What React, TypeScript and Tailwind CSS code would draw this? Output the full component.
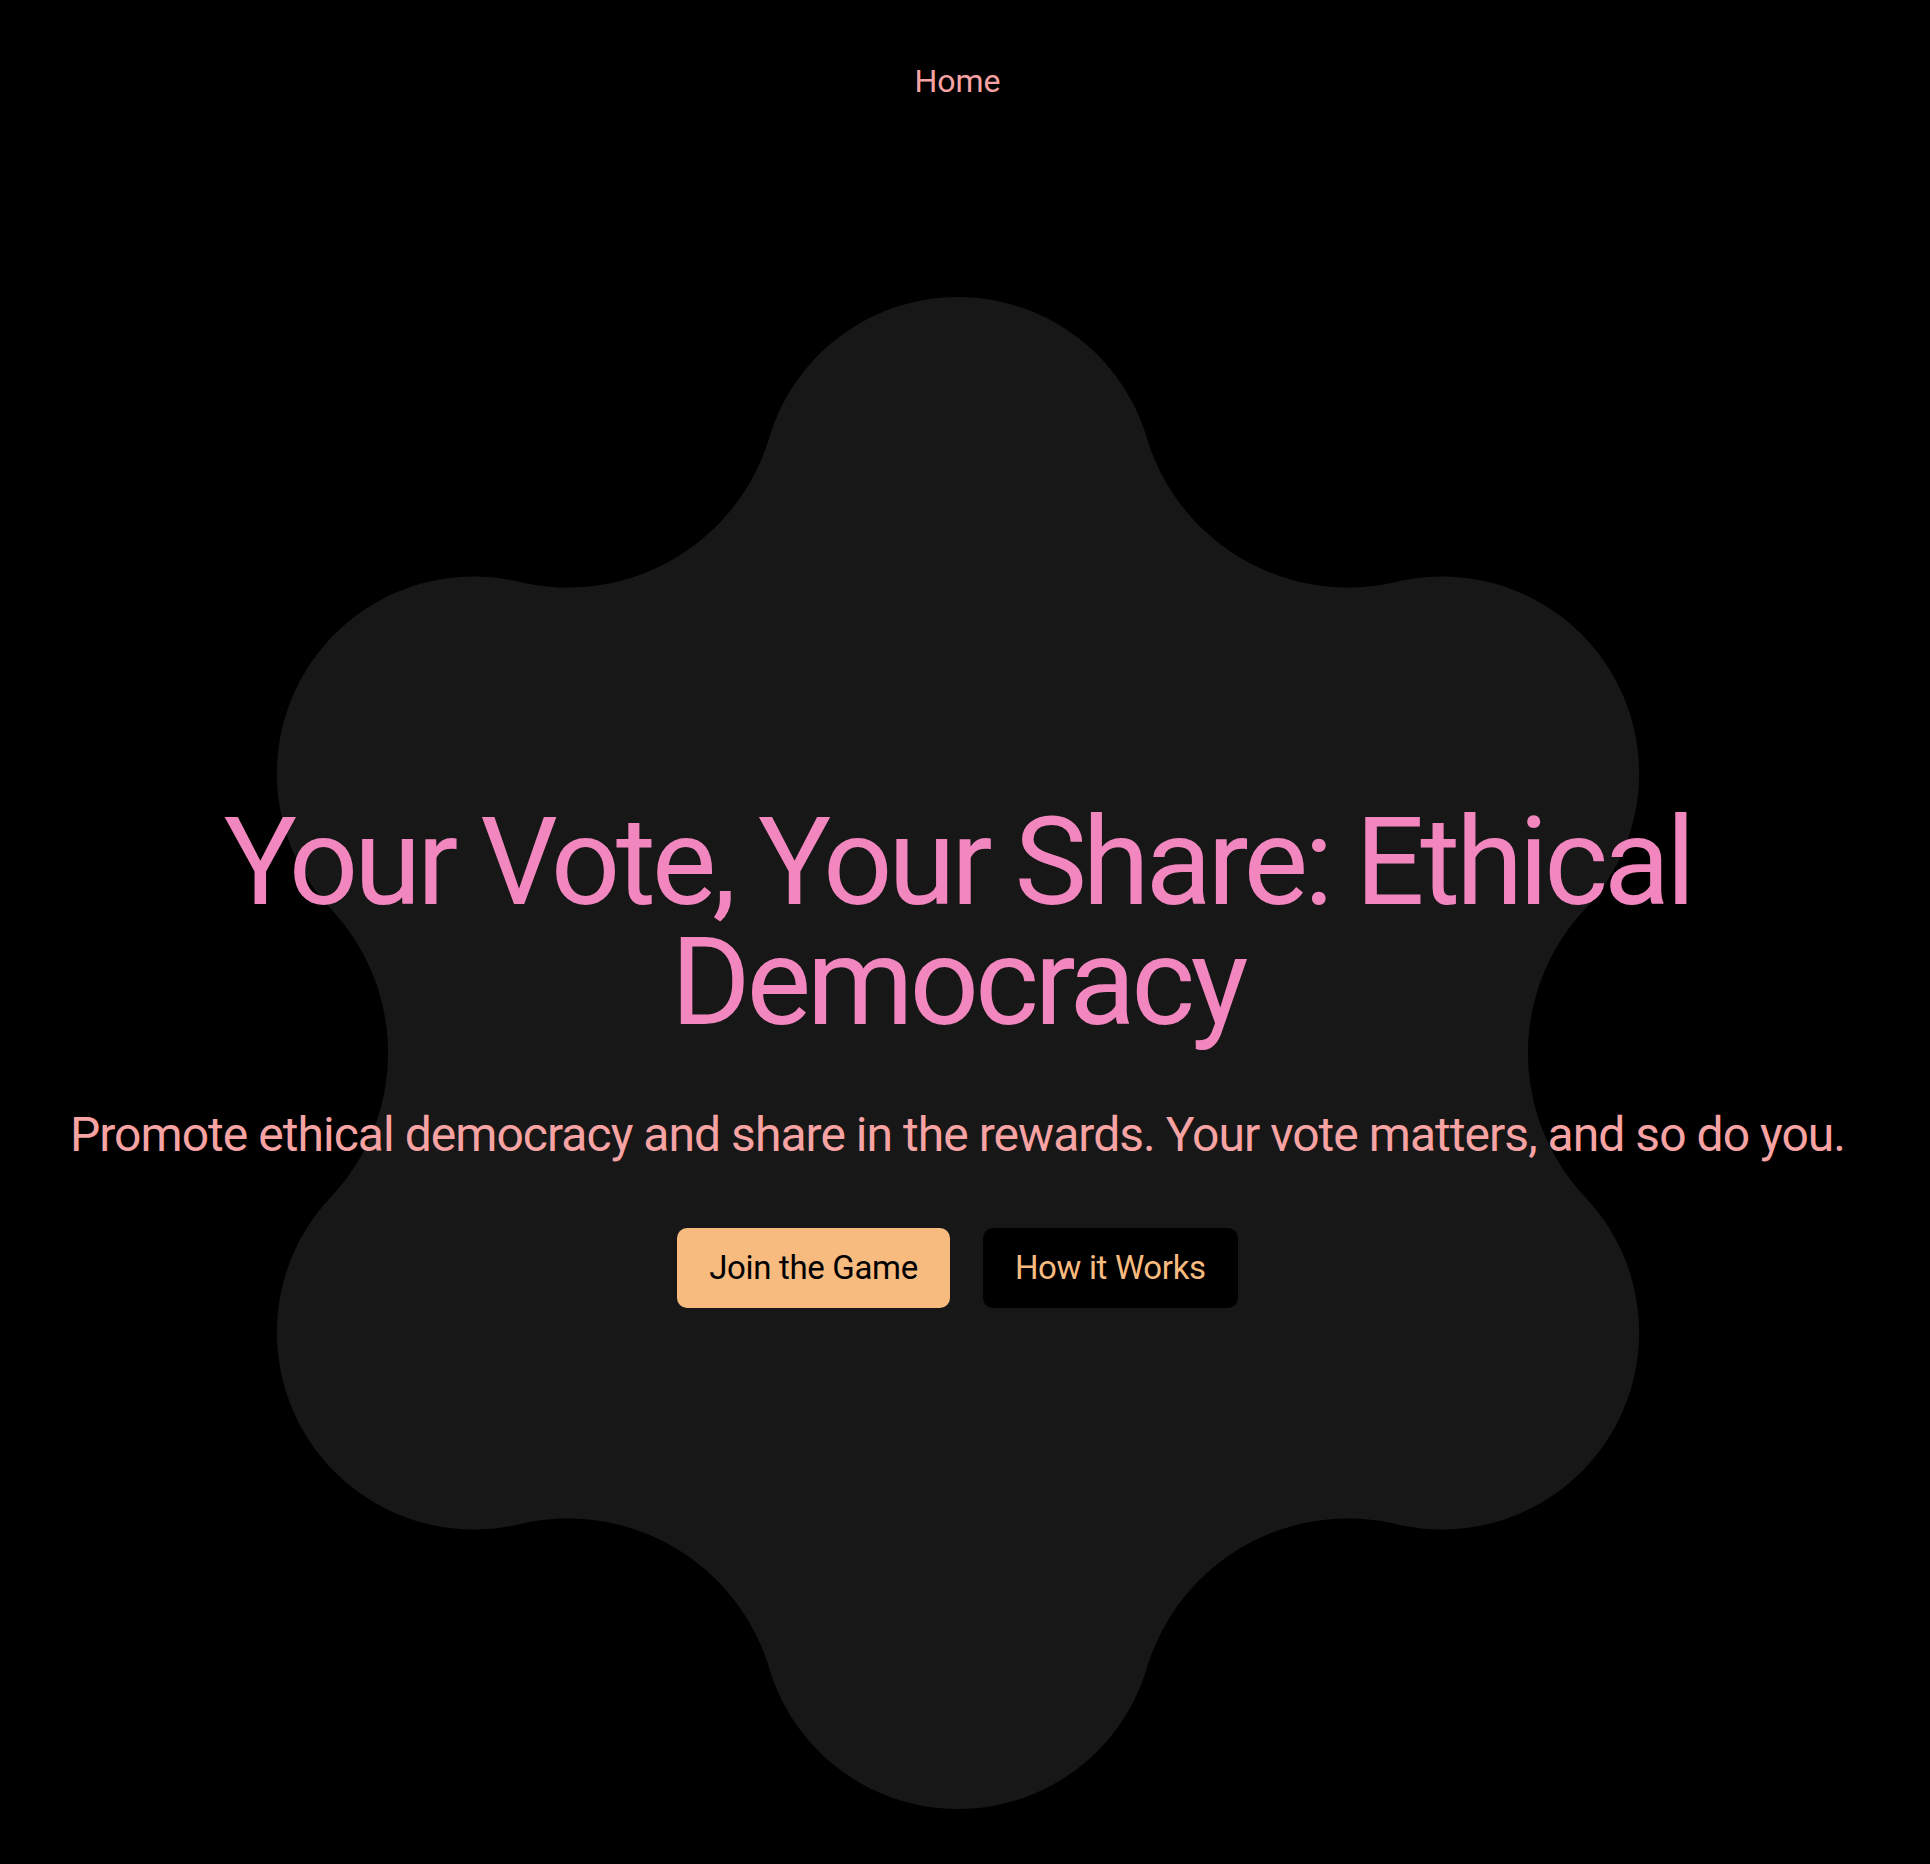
import React from "react";

function blobPath(w: number, h: number) {
  const cx = w / 2;
  const cy = h / 2;
  const L = 559; // lobe centre distance
  const Rl = 197; // lobe radius
  const N = 570; // neck distance
  const c30 = Math.cos(Math.PI / 6);
  const A = N * N + L * L - 2 * N * L * c30 - Rl * Rl;
  const rf = A / (2 * Rl - 2 * N + 2 * L * c30);
  const D = N + rf;
  const pos = (dist: number, deg: number) => {
    const t = (deg * Math.PI) / 180;
    return [cx + dist * Math.sin(t), cy - dist * Math.cos(t)];
  };
  const pts: number[][] = [];
  const steps = 60;
  for (let k = 0; k < 6; k++) {
    const th = k * 60;
    const [lx, ly] = pos(L, th);
    const [px, py] = pos(D, th - 30);
    const [nx, ny] = pos(D, th + 30);
    const a0 = Math.atan2(py - ly, px - lx);
    let a1 = Math.atan2(ny - ly, nx - lx);
    while (a1 <= a0) a1 += Math.PI * 2;
    for (let i = 0; i <= steps; i++) {
      const a = a0 + ((a1 - a0) * i) / steps;
      pts.push([lx + Rl * Math.cos(a), ly + Rl * Math.sin(a)]);
    }
    const [l2x, l2y] = pos(L, th + 60);
    const b0 = Math.atan2(ly - ny, lx - nx);
    let b1 = Math.atan2(l2y - ny, l2x - nx);
    while (b1 >= b0) b1 -= Math.PI * 2;
    for (let i = 1; i < steps; i++) {
      const b = b0 + ((b1 - b0) * i) / steps;
      pts.push([nx + rf * Math.cos(b), ny + rf * Math.sin(b)]);
    }
  }
  return (
    pts
      .map((p, i) => `${i === 0 ? "M" : "L"}${p[0].toFixed(2)} ${p[1].toFixed(2)}`)
      .join(" ") + " Z"
  );
}

export default function App() {
  const W = 1400;
  const H = 1540;
  return (
    <div className="w-full min-h-[1864px] bg-black overflow-hidden">
      <div className="w-[1915px] h-[1864px] bg-black flex flex-col font-['Roboto','Noto_Sans',sans-serif]">
        <nav className="h-[242px] shrink-0 flex justify-center pt-[61px]">
          <a className="text-[32px] leading-10 text-[#f7a3a3]">Home</a>
        </nav>
        <main className="relative flex-1 flex flex-col items-center justify-center pt-[5px]">
          <svg
            className="absolute left-1/2 top-1/2 -translate-x-1/2 -translate-y-1/2 w-[1400px] h-[1540px]"
            viewBox={`0 0 ${W} ${H}`}
          >
            <path d={blobPath(W, H)} fill="#171717" />
          </svg>
          <div className="relative flex flex-col items-center text-center">
            <h1 className="text-[122px] leading-[120px] tracking-[-0.035em] font-normal text-[#f286be] w-[1700px]">
              Your Vote, Your Share: Ethical Democracy
            </h1>
            <p className="mt-[56px] text-[48px] leading-[72px] tracking-[-0.02em] text-[#f7a3a3] whitespace-nowrap">
              Promote ethical democracy and share in the rewards. Your vote matters, and so do you.
            </p>
            <div className="mt-[57px] flex gap-[33px]">
              <button className="px-8 py-4 text-[33px] leading-[48px] tracking-[-0.01em] rounded-[10px] bg-[#f7ba7f] text-black">
                Join the Game
              </button>
              <button className="px-8 py-4 text-[33px] leading-[48px] tracking-[-0.01em] rounded-[10px] bg-black text-[#f7ba7f]">
                How it Works
              </button>
            </div>
          </div>
        </main>
      </div>
    </div>
  );
}
